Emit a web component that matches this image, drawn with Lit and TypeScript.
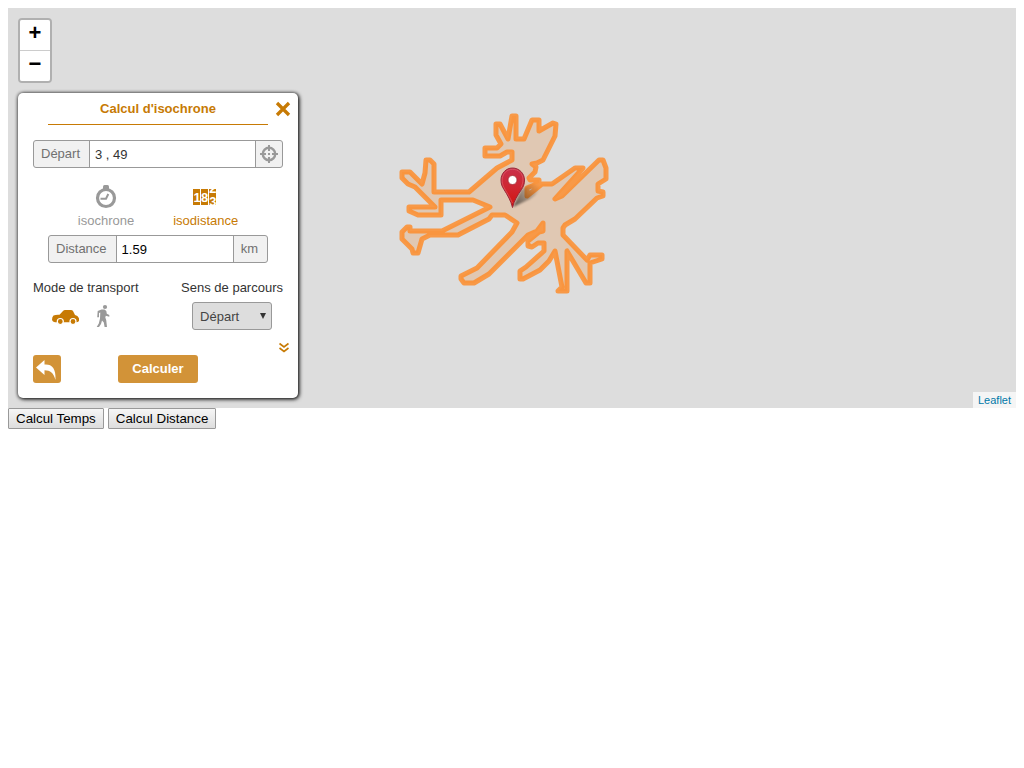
import { LitElement, html, css, svg } from "lit";
import { customElement, state } from "lit/decorators.js";

const AREA: number[][] = [
  [402, 172], [410, 172], [422, 184], [425, 173], [426, 160], [430, 160], [434, 164], [434, 192],
  [469, 192], [497, 168], [512, 160], [512, 152], [507, 152], [500, 156], [485, 156], [485, 148],
  [497, 148], [501, 144], [496, 135], [496, 124], [500, 124], [508, 139], [512, 116], [516, 116],
  [516, 139], [524, 139], [532, 120], [539, 120], [539, 131], [553, 123], [556, 124], [555, 136],
  [543, 160], [537, 163], [532, 164], [536, 167], [535, 172], [529, 178], [530, 180], [539, 180], [539, 183],
  [527, 188], [527, 196], [542, 184], [552, 184], [575, 168], [583, 168], [555, 199], [562, 196],
  [599, 160], [603, 160], [606, 168], [606, 179], [598, 184], [598, 191], [603, 192], [603, 196],
  [597, 198], [575, 219], [565, 225], [563, 228], [563, 235], [587, 260], [590, 255], [602, 255],
  [602, 259], [590, 263], [590, 283], [586, 283], [567, 251], [567, 291], [558, 291], [562, 287],
  [555, 251], [549, 261], [540, 270], [523, 279], [520, 279], [520, 271], [526, 267], [544, 251],
  [544, 243], [538, 243], [532, 247], [528, 246], [528, 241], [539, 232], [543, 231], [543, 223],
  [537, 231], [528, 235], [489, 274], [474, 283], [464, 283], [461, 279], [461, 276], [477, 268],
  [512, 232], [517, 223], [505, 215], [492, 215], [489, 219], [458, 235], [430, 235], [422, 239],
  [418, 253], [413, 253], [412, 249], [402, 239], [402, 232], [407, 227], [410, 227], [410, 231],
  [442, 231], [490, 207], [473, 200], [441, 200], [441, 215], [418, 215], [409, 211], [409, 207],
  [435, 207], [415, 187], [408, 184], [402, 178],
];

@customElement("iso-map")
export class IsoMap extends LitElement {
  static styles = css`
    :host { display: block; position: relative; background: #ddd; overflow: hidden; height: 400px; font: 12px/18px "Liberation Sans", Arial, sans-serif; }
    .overlay { position: absolute; left: calc(50% - 114px); top: calc(50% - 98px); width: 220px; height: 190px; display: block; }
    .controls { position: absolute; top: 10px; left: 10px; display: flex; flex-direction: column; align-items: flex-start; gap: 10px; }
    .zoom { display: flex; flex-direction: column; border: 2px solid rgba(0, 0, 0, 0.2); border-radius: 4px; background-clip: padding-box; }
    .zoom button { width: 30px; height: 30px; padding: 0 0 4px; border: 0; background: #fff; color: #000; font: bold 22px/26px "Liberation Sans", Arial, sans-serif; }
    .zoom .in { border-radius: 2px 2px 0 0; border-bottom: 1px solid #ccc; height: 31px; }
    .zoom .out { border-radius: 0 0 2px 2px; }
    .credit { position: absolute; right: 0; bottom: 0; padding: 0 5px; background: rgba(255, 255, 255, 0.7); font-size: 11px; line-height: 16px; }
    .credit a { color: #0078a8; text-decoration: none; }
  `;

  render() {
    return html`
      <svg class="overlay" viewBox="398 110 220 190" aria-hidden="true">
        <defs>
          <linearGradient id="pin" x1="0" y1="0" x2="0" y2="1">
            <stop offset="0" stop-color="#c9304a" /><stop offset=".5" stop-color="#cf2630" /><stop offset="1" stop-color="#d3120c" />
          </linearGradient>
          <linearGradient id="shade" gradientUnits="userSpaceOnUse" x1="513" y1="207" x2="538" y2="184">
            <stop offset="0" stop-color="#000" stop-opacity=".6" /><stop offset=".5" stop-color="#000" stop-opacity=".3" /><stop offset="1" stop-color="#000" stop-opacity="0" />
          </linearGradient>
          <filter id="soft"><feGaussianBlur stdDeviation="1" /></filter>
        </defs>
        <polygon points=${AREA.map((p) => p.join(",")).join(" ")} fill="#ee7711" fill-opacity=".2"
          stroke="#ff8822" stroke-opacity=".8" stroke-width="5" stroke-linejoin="round" />
        <path d="M513 207 L521 190 Q530 182 538 185 Q542 191 530 199Z" fill="url(#shade)" filter="url(#soft)" />
        <path d="M512.5 207.5C511 201 507.500 195 504 189.500C502 186.500 501 184 501 180C501 173.400 506 168 512.500 168S524.500 173.400 524.500 180C524.500 184 523.500 186.500 521.500 189.500C517.500 195 514 201 512.500 207.500Z"
          fill="url(#pin)" stroke="#98293a" stroke-width="1" />
        <path d="M512.5 203C510 197 506 191.500 504 187.500C502.500 184.500 502 182 502.200 179C503 173 507 169.300 512.500 169.300S522.500 173 523 179C523 182 522.500 184.500 521 187.500" fill="none" stroke="#e8717c" stroke-opacity=".5" />
        <circle cx="512.5" cy="180" r="4.500" fill="#fff" stroke="#a32932" stroke-width=".8" />
      </svg>
      <div class="controls">
        <div class="zoom">
          <button class="in" title="Zoom in">+</button>
          <button class="out" title="Zoom out">−</button>
        </div>
        <iso-panel></iso-panel>
      </div>
      <div class="credit"><a href="#">Leaflet</a></div>
    `;
  }
}

@customElement("iso-panel")
export class IsoPanel extends LitElement {
  @state() private method = "distance";
  @state() private mode = "car";

  static styles = css`
    * { box-sizing: border-box; }
    :host { display: block; box-sizing: border-box; width: 280px; padding: 0 15px 15px; background: #fff; border-radius: 5px; box-shadow: 0 0 3px 1px rgba(0, 0, 0, 0.3), 1px 1px 4px #000; color: #333; font: 13px/15px "Liberation Sans", Arial, sans-serif; position: relative; }
    button, input, select { font: inherit; margin: 0; }
    svg { display: block; }
    .title { margin: 0 15px 15px; height: 32px; border-bottom: 1px solid #c77a04; color: #c77a04; line-height: 31px; text-align: center; font-weight: bold; }
    .close { position: absolute; right: 8px; top: 9px; padding: 0; border: 0; background: none; }
    .close svg { overflow: visible; }
    .row { display: flex; height: 28px; border: 1px solid #999; border-radius: 3px; overflow: hidden; background: #f1f1f1; line-height: 26px; color: #707070; }
    .row label, .row .unit { padding: 0 9px 0 7px; }
    .row input { flex: 1; min-width: 0; border: 0; border-left: 1px solid #999; border-right: 1px solid #999; padding: 2px 5px 0; background: #fff; color: #333; outline: 0; }
    .row .pick { padding: 0; width: 26px; border: 0; background: none; display: grid; place-items: center; }
    .short { margin: 0 15px; }
    .short input { color: #000; }
    .tabs { display: flex; justify-content: center; gap: 39px; padding: 15px 0 7px; }
    .opt { color: #999; position: relative; display: grid; justify-items: center; gap: 2px; }
    .opt.on { color: #c77a04; }
    .opt input { position: absolute; opacity: 0; width: 1px; height: 1px; }
    .digits { font: bold 13px "Liberation Sans", Arial, sans-serif; }
    .settings { display: flex; justify-content: space-between; padding-top: 17px; }
    .settings .col { display: flex; flex-direction: column; gap: 7px; }
    .modes { display: flex; gap: 10px; padding-left: 18px; }
    .pickbox { position: relative; align-self: center; width: 80px; height: 28px; }
    .pickbox select { appearance: none; width: 100%; height: 28px; padding: 0 7px; border: 1px solid #999; border-radius: 3px; background: #ddd; color: #444; }
    .pickbox svg { position: absolute; right: 6px; top: 11px; pointer-events: none; }
    .more { display: flex; justify-content: flex-end; margin: 0 -6px; height: 25px; padding-top: 12px; }
    .more button { height: 11px; padding: 0; border: 0; background: none; }
    .actions { display: grid; grid-template-columns: 1fr 80px 1fr; align-items: center; }
    .actions button { height: 28px; border: 0; border-radius: 3px; background: #d29338; color: #fff; font-weight: bold; padding: 0; }
    .actions .go { padding-bottom: 2px; }
    .actions .back { width: 28px; }
  `;

  private icon(name: string) {
    const shapes: Record<string, unknown> = {
      watch: svg`<path d="M11 3.500Q11 2 12.500 2H15.500Q17 2 17 3.500V6H11Z" fill="currentColor"/>
        <circle cx="14" cy="15" r="8.500" fill="none" stroke="currentColor" stroke-width="3.200"/>
        <path d="M8.500 15.800H14L16.300 11" fill="none" stroke="currentColor" stroke-width="2"/>`,
      meter: svg`<path d="M1 6H8V22H1ZM9 6H16V22H9ZM17 6H24V22H17Z" fill="currentColor"/>
        <g class="digits" fill="#fff" text-anchor="middle"><text x="5" y="19">1</text><text x="12.500" y="19">8</text>
        <svg x="17" y="6" width="7" height="16" viewBox="17 6 7 16"><text x="20.800" y="10">2</text><text x="20.800" y="23">3</text></svg></g>`,
      car: svg`<path d="M2.500 13.500Q5 12.500 8.500 12.800L12 9Q12.800 8 14 8H20Q21.300 8 22 9L24 13Q27 13.500 27.500 15.500Q28.500 17 28 19Q27 20.300 25 20.300H4Q1.500 20 1 18Q1 14.500 2.500 13.500Z" fill="currentColor"/>
        <g fill="currentColor" stroke="#fff" stroke-width="1.200"><circle cx="9.300" cy="19.500" r="3"/><circle cx="22" cy="19.500" r="3"/></g>`,
      walk: svg`<circle cx="16" cy="5" r="2.100" fill="currentColor"/>
        <path d="M8.700 9L12.500 7.500H15.500L17.300 9L17.800 11.800L20.300 13V14.800L16.800 13.800L16.300 15.500L17.200 18L18 25H15.600L14.800 20.500L13 18.500L12 22L10 25L7.700 25L9.800 21.500L11 16.500L11.300 10.500L10 11V15.200H8.200Z" fill="currentColor"/>`,
    };
    return html`<svg width="28" height="28" viewBox="0 0 28 28" aria-hidden="true">${shapes[name]}</svg>`;
  }

  private option(group: "method" | "mode", value: string, icon: string, text = "") {
    const on = this[group] === value;
    return html`<label class=${on ? "opt on" : "opt"} title=${value}>
      <input type="radio" name=${group} aria-label=${text || value} .checked=${on} @change=${() => (this[group] = value)} />
      ${this.icon(icon)}${text ? html`<span>${text}</span>` : ""}
    </label>`;
  }

  render() {
    return html`
      <div class="title">Calcul d'isochrone</div>
      <button class="close" aria-label="Fermer">
        <svg width="14" height="14"><path d="M1 1L13 13M13 1L1 13" stroke="#c77a04" stroke-width="3.300" /></svg>
      </button>
      <div class="row">
        <label for="origin">Départ</label>
        <input id="origin" type="text" value="3 , 49" />
        <button class="pick" aria-label="Localiser">
          <svg width="18" height="18" fill="none" stroke="#999" stroke-width="2">
            <circle cx="9" cy="9" r="6.200" stroke-width="2.400" /><path d="M9 0V6M9 12V18M0 9H6M12 9H18M8 9H10" />
          </svg>
        </button>
      </div>
      <div class="tabs">
        ${this.option("method", "time", "watch", "isochrone")}
        ${this.option("method", "distance", "meter", "isodistance")}
      </div>
      <div class="row short">
        <label for="distance">Distance</label>
        <input id="distance" type="text" value="1.59" />
        <span class="unit">km</span>
      </div>
      <div class="settings">
        <div class="col">
          <span>Mode de transport</span>
          <div class="modes">${this.option("mode", "car", "car")}${this.option("mode", "walk", "walk")}</div>
        </div>
        <div class="col">
          <label for="direction">Sens de parcours</label>
          <div class="pickbox">
            <select id="direction"><option>Départ</option><option>Arrivée</option></select>
            <svg width="6" height="6"><path d="M0 0H6L3 6Z" fill="#333" /></svg>
          </div>
        </div>
      </div>
      <div class="more">
        <button aria-label="Options">
          <svg width="10" height="11" fill="none" stroke="#c77a04" stroke-width="1.600"><path d="M0.500 1.500L5 5L9.500 1.500M0.500 6L5 9.500L9.500 6" /></svg>
        </button>
      </div>
      <div class="actions">
        <button class="back" aria-label="Retour">
          <svg width="28" height="28"><path d="M3 12.500L11.500 5V9.500C19 9 23 13 22.500 25C20.500 18 17.500 15.500 11.500 15.300V20Z" fill="#fff" /></svg>
        </button>
        <button class="go">Calculer</button>
      </div>
    `;
  }
}

@customElement("app-root")
export class AppRoot extends LitElement {
  static styles = css`
    :host { display: block; padding: 8px; font-family: "Liberation Sans", Arial, sans-serif; }
    .bar { display: flex; gap: 4px; }
    .bar button { height: 21px; margin: 0; padding: 0 7px; border: 1px solid #999; border-radius: 1px; background: linear-gradient(#f6f6f6, #ddd); color: #000; font-family: inherit; }
  `;

  render() {
    return html`
      <iso-map></iso-map>
      <div class="bar">
        <button>Calcul Temps</button>
        <button>Calcul Distance</button>
      </div>
    `;
  }
}
